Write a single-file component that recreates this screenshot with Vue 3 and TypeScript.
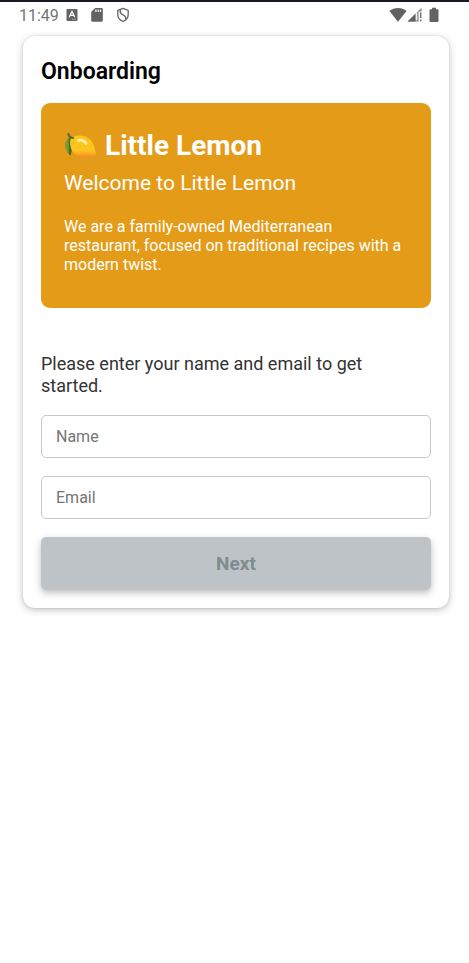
<script setup lang="ts">
import { computed, ref } from 'vue'

const name = ref('')
const email = ref('')
const canContinue = computed(() => name.value.trim() !== '' && /^\S+@\S+\.\S+$/.test(email.value))
</script>

<template>
  <div class="screen">
    <header class="status">
      <div class="status-left">
        <time class="clock">11:49</time>
        <svg class="glyph" width="12" height="14" viewBox="0 0 12 14" aria-hidden="true">
          <rect x="0.5" y="1" width="11" height="12" rx="1" fill="#626262" />
          <path d="M3.2 9.2 6 3.4 8.8 9.2M4.3 7.4h3.4" fill="none" stroke="#fff" stroke-width="1.3" />
          <path d="M6 11.3h4" stroke="#bbb" stroke-width="1" stroke-dasharray="1 .6" />
        </svg>
        <svg class="glyph" width="12" height="16" viewBox="0 0 12 16" aria-hidden="true">
          <path d="M4.2 1H10.6a1.2 1.2 0 0 1 1.2 1.2V13.600a1.200 1.200 0 0 1-1.200 1.200H1.400A1.200 1.200 0 0 1 .2 13.600V5z" fill="#626262" />
          <path d="M4.900 2.500v2.400M7.200 2.500v2.400M9.500 2.500v2.400" stroke="#fff" stroke-width="1.200" />
        </svg>
        <svg class="glyph" width="14" height="16" viewBox="0 0 14 16" aria-hidden="true">
          <path d="M7 1.400 12.200 3.300V7.500c0 3.200-2.200 5.800-5.200 6.900C4 13.300 1.800 10.700 1.800 7.500V3.300z" fill="none" stroke="#666" stroke-width="1.300" stroke-linejoin="round" />
          <path d="M4.400 2.600c-.6 2.800.4 4.300 2.600 5.200 2.100.9 3.100 2.100 2.700 4.600" fill="none" stroke="#666" stroke-width="1.400" />
        </svg>
      </div>
      <div class="status-right">
        <svg width="18" height="16" viewBox="0 0 18 16" aria-hidden="true">
          <path d="M.4 4C5.300 0 12.700 0 17.600 4L9 14.800z" fill="#626262" />
        </svg>
        <svg width="16" height="16" viewBox="0 0 16 16" aria-hidden="true">
          <path d="M.6 14.500 14.600.8V4.500H11.600V14.500z" fill="#8a8a8a" />
          <path d="M.6 14.500 8.500 6.800V14.500z" fill="#626262" />
          <path d="M9.500 6v7.200" stroke="#f2f2f2" stroke-width="1.600" />
          <path d="M13.700 5.500V11M13.700 12.500v2" stroke="#777" stroke-width="1.500" />
        </svg>
        <svg class="battery" width="10" height="16" viewBox="0 0 10 16" aria-hidden="true">
          <path d="M3 .8h4v1.500h1.500a1 1 0 0 1 1 1v10.700a1 1 0 0 1-1 1h-7a1 1 0 0 1-1-1V3.300a1 1 0 0 1 1-1H3z" fill="#626262" />
        </svg>
      </div>
    </header>

    <main class="card">
      <h1 class="title">Onboarding</h1>

      <section class="hero">
        <h2 class="brand">
          <svg class="lemon" width="34" height="28" viewBox="0 0 34 28" role="img" aria-label="Lemon">
            <defs>
              <linearGradient id="rind" x1="0" y1="0" x2="0" y2="1">
                <stop offset="0.7" stop-color="#fdc51c" />
                <stop offset="1" stop-color="#f58b2e" />
              </linearGradient>
              <linearGradient id="leaf" x1="0" y1="0" x2="1" y2="0">
                <stop offset="0.45" stop-color="#7c9d2c" />
                <stop offset="0.6" stop-color="#4f6b2c" />
              </linearGradient>
            </defs>
            <path d="M6 5C1.500 8 0 12 1.500 16.500 2.600 20 4.500 22 6.500 23.400 8.600 19 9 9 6 5z" fill="url(#leaf)" />
            <path d="M7 6C11 2.800 20 2.500 25 6.500 29 9.700 30.500 14 31 18c1 1.500 1.300 3.800.5 5.500-2 1.300-4 1-5.500.800C18 26.500 10.500 23.500 8 18.500 6 14.500 5.500 9 7 6z" fill="url(#rind)" />
            <path d="M4.500 2C4.800 4.500 6 5.800 9 6" fill="none" stroke="#58702f" stroke-width="2.200" stroke-linecap="round" />
            <path d="M14.500 8.500c3-1 6.500.4 7.500 3" fill="none" stroke="#fff0b0" stroke-width="2.800" stroke-linecap="round" />
          </svg>
          <span>Little Lemon</span>
        </h2>
        <p class="welcome">Welcome to Little Lemon</p>
        <p class="about">
          We are a family-owned Mediterranean restaurant, focused on traditional recipes with a modern twist.
        </p>
      </section>

      <form class="form" @submit.prevent>
        <p class="prompt">Please enter your name and email to get started.</p>
        <input v-model="name" class="field" type="text" placeholder="Name" aria-label="Name" />
        <input v-model="email" class="field" type="email" placeholder="Email" aria-label="Email" />
        <button class="next" type="submit" :disabled="!canContinue">Next</button>
      </form>
    </main>
  </div>
</template>

<style>
body {
  margin: 0;
  background: #fefefe;
}
</style>

<style scoped>
.screen {
  box-sizing: border-box;
  min-height: 100vh;
  border-top: 2px solid #1b1b26;
  background: #fefefe;
  font-family: Roboto, "Liberation Sans", sans-serif;
}

.status {
  display: flex;
  justify-content: space-between;
  align-items: center;
  height: 26px;
  padding: 0 30px 0 19px;
}

.status-left,
.status-right {
  display: flex;
  align-items: center;
}

.clock {
  padding-top: 2px;
  font-size: 16px;
  line-height: 20px;
  color: #757575;
  margin-right: 7px;
}

.glyph {
  margin-right: 13px;
}

.battery {
  margin-left: 6px;
}

.card {
  margin: 8px 20px 24px 23px;
  padding: 18px;
  border-radius: 12px;
  background: #fff;
  box-shadow: 0 2px 7px rgba(0, 0, 0, 0.24), 0 0 2px rgba(0, 0, 0, 0.12);
}

.title {
  margin: 0 0 13px;
  font-size: 23px;
  font-weight: 600;
  line-height: 36px;
  color: #000;
}

.hero {
  padding: 24px 23px 34px;
  border-radius: 9px;
  background: #e49b17;
  color: #fff;
}

.brand {
  display: flex;
  align-items: center;
  gap: 7px;
  margin: 0;
  font-size: 28px;
  font-weight: 700;
  line-height: 38px;
}

.welcome {
  margin: 4px 0 20px;
  font-size: 21px;
  line-height: 28px;
}

.about {
  margin: 0;
  font-size: 16px;
  line-height: 19px;
}

.form {
  display: flex;
  flex-direction: column;
  gap: 18px;
  margin-top: 45px;
}

.prompt {
  margin: 0;
  padding-right: 18px;
  font-size: 18px;
  line-height: 22px;
  color: #333;
}

.field {
  box-sizing: border-box;
  width: 100%;
  height: 43px;
  padding: 0 14px;
  border: 1px solid #c8c8c8;
  border-radius: 5px;
  background: #fff;
  font: inherit;
  font-size: 16px;
  color: #333;
}

.field::placeholder {
  color: #757575;
  opacity: 1;
}

.next {
  height: 53px;
  border: 0;
  border-radius: 5px;
  background: #e49b17;
  box-shadow: 0 3px 7px rgba(0, 0, 0, 0.26);
  font: inherit;
  font-size: 19px;
  font-weight: 700;
  color: #fff;
}

.next:disabled {
  background: #bdc3c7;
  color: #7f8c8d;
}
</style>
